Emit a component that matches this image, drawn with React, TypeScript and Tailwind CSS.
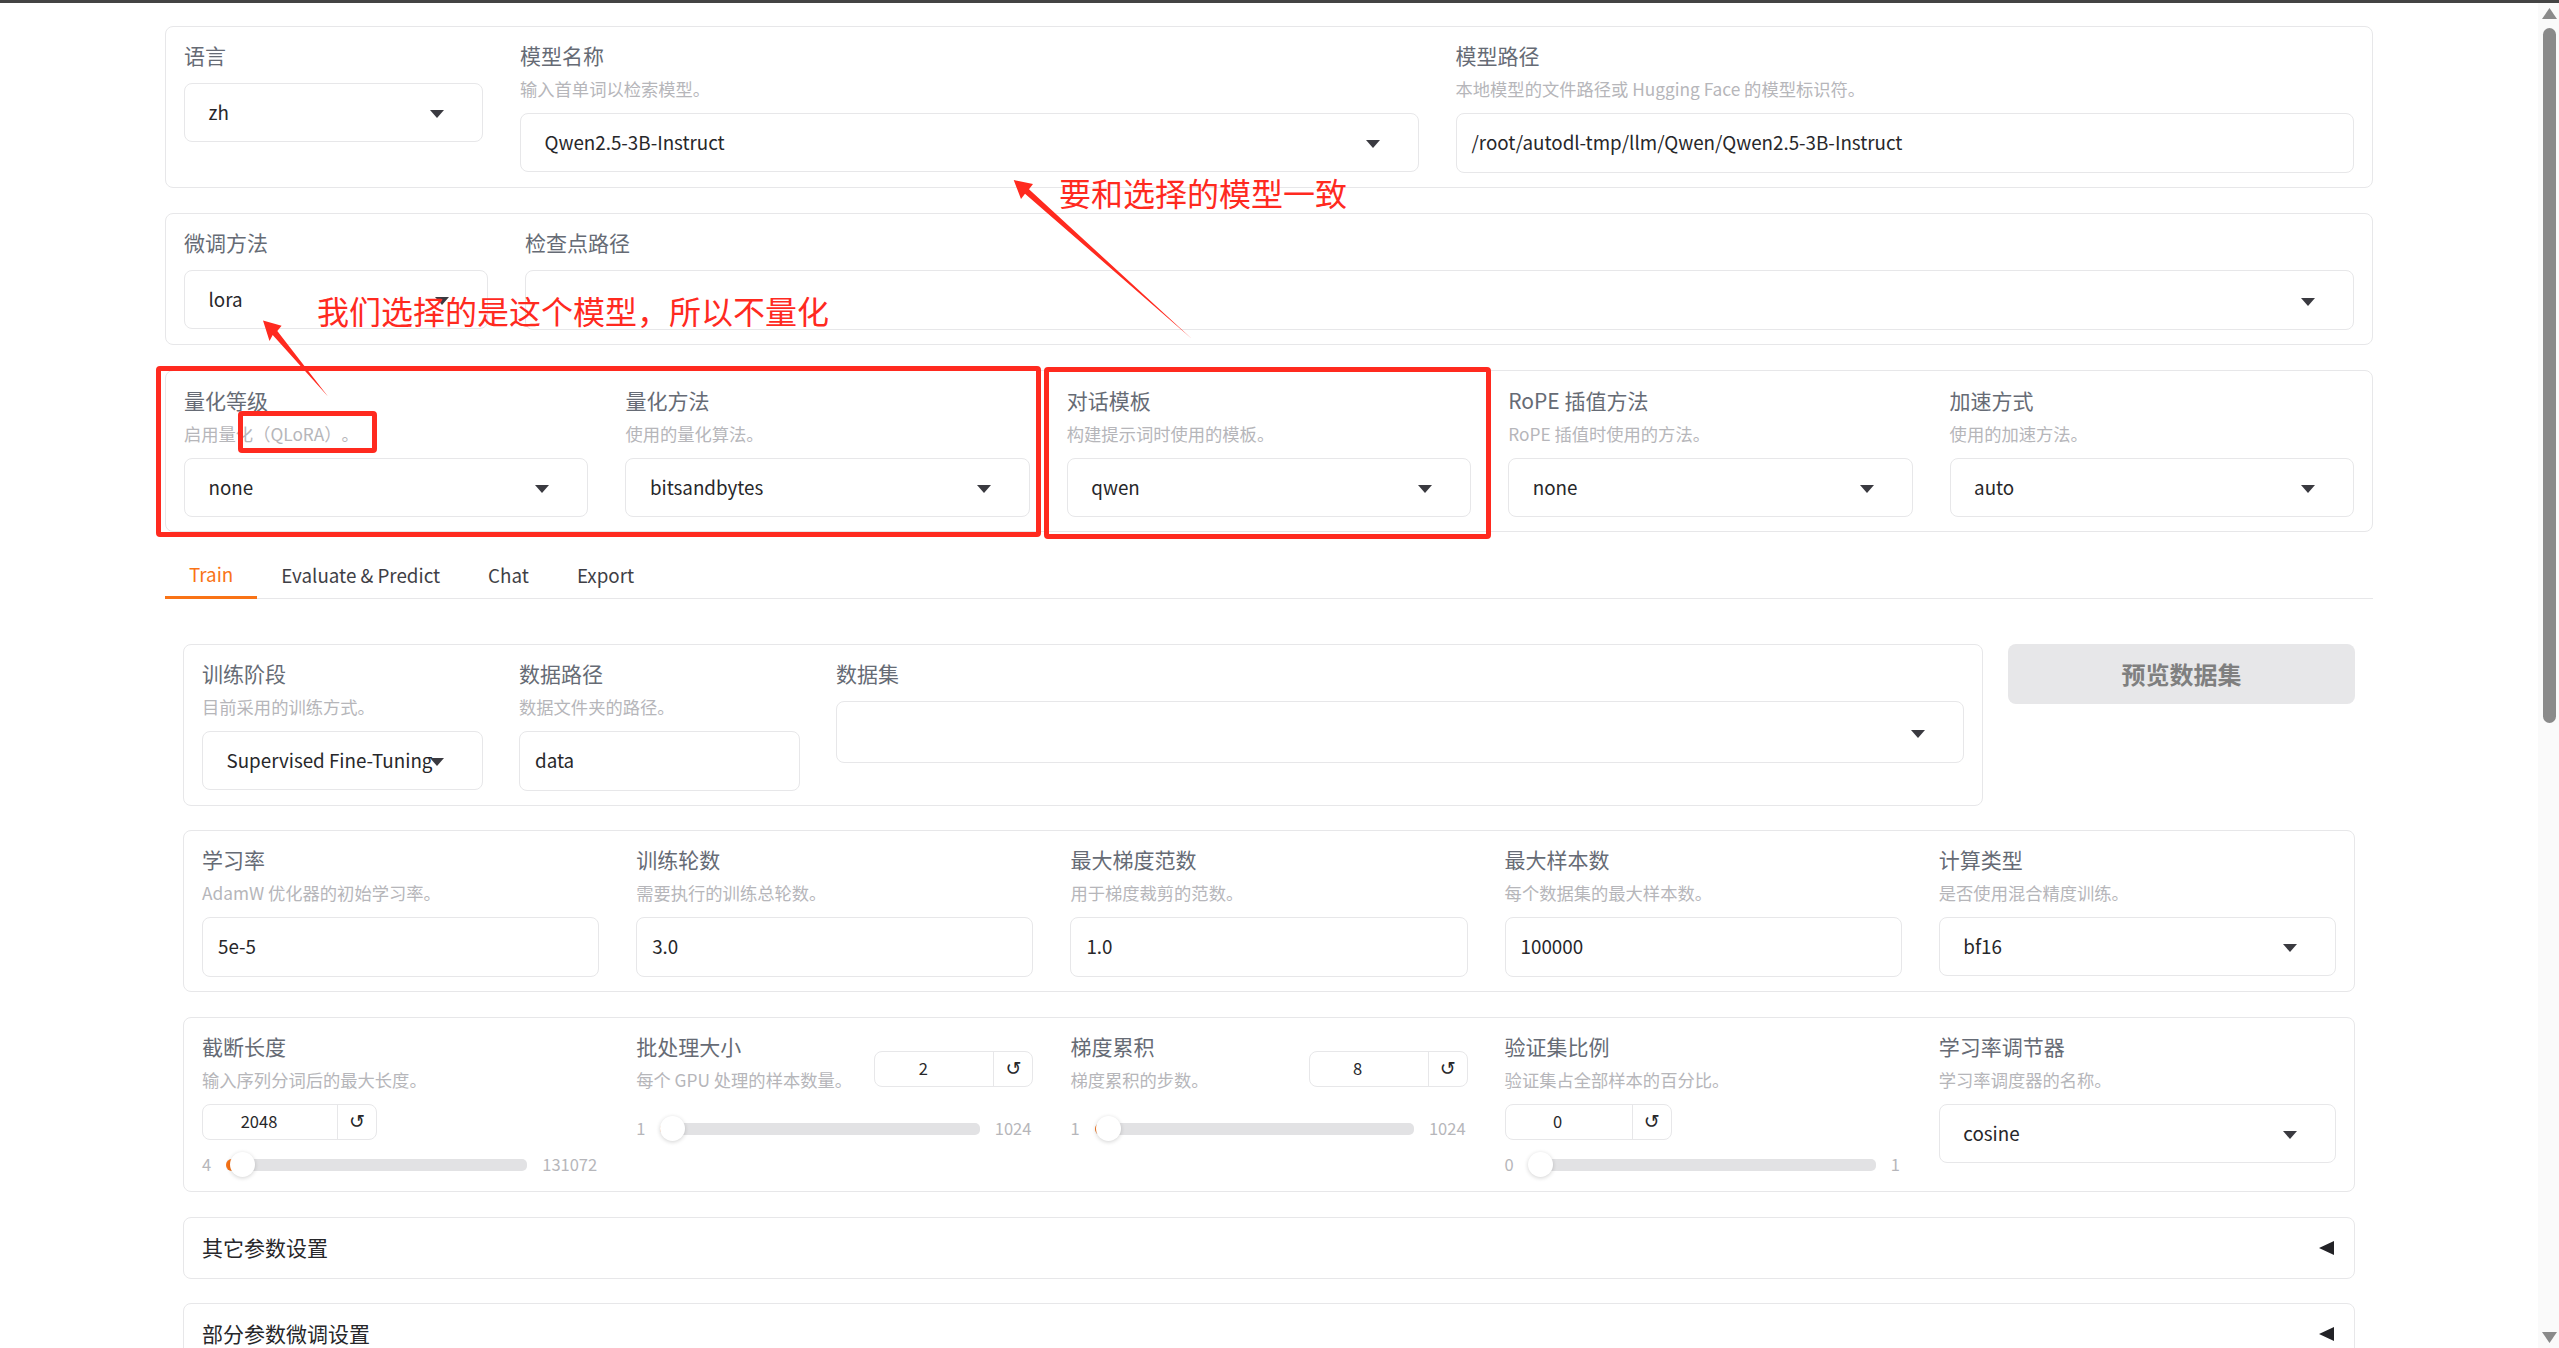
const panel = "rounded-[8px] border-[1.5px] border-[#e7e7e9] bg-white px-[18px] pt-[14.5px] pb-[14.5px]";
const box = "rounded-[8px] border-[1.5px] border-[#e7e7e9] bg-white";

const Caret = () => (
  <svg width="14" height="8" viewBox="0 0 14 8" className="absolute right-[38px] top-1/2 -translate-y-[2px] fill-[#3a3a40]">
    <path d="M0 0h14L7 8z" />
  </svg>
);

const Head = ({ label, info }: { label: string; info?: string }) => (
  <>
    <div className={`h-[30px] text-[21px] leading-[26px] text-[#666b75] ${info ? "mb-[5px]" : "mb-[11px]"}`}>{label}</div>
    {info && (
      <div className="mb-[12px] h-[24px] whitespace-nowrap text-[17.3px] leading-[24px] text-[#b6b6ba] [text-spacing-trim:space-all]">
        {info}
      </div>
    )}
  </>
);

const Select = ({ value, h = "h-[59px]" }: { value?: string; h?: string }) => (
  <div className={`relative flex items-center whitespace-nowrap pl-[23.5px] text-[18.8px] text-[#27272a] ${box} ${h}`}>
    {value}
    <Caret />
  </div>
);

const Input = ({ value }: { value: string }) => (
  <div className={`flex h-[60px] items-center whitespace-nowrap pl-[15px] text-[18.8px] text-[#27272a] ${box}`}>{value}</div>
);

const NumberBox = ({ value, w }: { value: string; w: string }) => (
  <div className={`flex h-[36px] items-center text-[16.5px] text-[#27272a] ${box} ${w}`}>
    <div className="flex-1 pr-[22px] text-center">{value}</div>
    <div className="flex h-full w-[39px] items-center justify-center border-l-[1.5px] border-[#e7e7e9] font-['DejaVu_Sans',sans-serif] text-[19px]">↺</div>
  </div>
);

const Slider = ({ min, max, thumb, fill }: { min: string; max: string; thumb: string; fill: string }) => (
  <div className="mt-[13px] flex h-[24px] items-center gap-[15px] pr-[2px] text-[16.5px] text-[#b6b6ba]">
    <span>{min}</span>
    <div className="relative h-[12px] flex-1 rounded-[5px] bg-[#e2e2e4]">
      <div className={`absolute left-0 top-0 h-full rounded-l-[6px] bg-[#f97316] ${fill}`} />
      <div className={`absolute -top-[6.5px] h-[25px] w-[25px] rounded-full bg-white shadow-[0_1px_4px_rgba(0,0,0,0.18)] ${thumb}`} />
    </div>
    <span>{max}</span>
  </div>
);

const Accordion = ({ title }: { title: string }) => (
  <div className={`flex h-[62px] shrink-0 items-center justify-between pl-[18px] pr-[20px] text-[21px] leading-[26px] text-[#27272a] ${box}`}>
    <span className="-mt-[2px]">{title}</span>
    <svg width="15" height="14" viewBox="0 0 15 14" className="fill-[#222226]">
      <path d="M15 0v14L0 7z" />
    </svg>
  </div>
);

const InlineHead = ({ label, info, value, w }: { label: string; info: string; value: string; w: string }) => (
  <div className="flex justify-between">
    <div>
      <Head label={label} info={info} />
    </div>
    <div className="mt-[18px]">
      <NumberBox value={value} w={w} />
    </div>
  </div>
);

const Annotations = () => (
  <div className="pointer-events-none absolute inset-0">
    <div className="absolute left-[156px] top-[366px] h-[171px] w-[885px] rounded-[4px] border-[5px] border-[#ff2a1f]" />
    <div className="absolute left-[1044px] top-[367px] h-[172px] w-[447px] rounded-[4px] border-[5px] border-[#ff2a1f]" />
    <div className="absolute left-[238px] top-[411px] h-[42px] w-[139px] rounded-[4px] border-[5px] border-[#ff2a1f]" />
    <svg className="absolute inset-0" width="2559" height="1348" viewBox="0 0 2559 1348">
      <path fill="#ff2a1f" d="M1013.7 180L1033 184L1029 189.3L1192 339L1025 193.7L1021 199Z" />
      <path fill="#ff2a1f" d="M263 320.4L281.6 325.7L277.3 331L328 396.4L272.7 335L269.5 341Z" />
    </svg>
    <div className="absolute left-[1059px] top-[171.5px] whitespace-nowrap text-[32px] leading-[40px] text-[#ff2a1f]">要和选择的模型一致</div>
    <div className="absolute left-[317px] top-[290px] whitespace-nowrap text-[32px] leading-[40px] text-[#ff2a1f]">我们选择的是这个模型，所以不量化</div>
  </div>
);

export default function App() {
  return (
    <div className="relative h-[1348px] w-full overflow-hidden bg-white font-['Noto_Sans_CJK_SC','Noto_Sans',sans-serif]">
      <div className="h-[3px] bg-[#444444]" />
      <div className="flex h-[1345px]">
        <main className="ml-[165px] flex w-[2208px] shrink-0 flex-col pt-[23px]">
          <section className={panel}>
            <div className="grid grid-cols-[299px_1fr_1fr] gap-[37px]">
              <div>
                <Head label="语言" />
                <Select value="zh" />
              </div>
              <div>
                <Head label="模型名称" info="输入首单词以检索模型。" />
                <Select value="Qwen2.5-3B-Instruct" />
              </div>
              <div>
                <Head label="模型路径" info="本地模型的文件路径或 Hugging Face 的模型标识符。" />
                <Input value="/root/autodl-tmp/llm/Qwen/Qwen2.5-3B-Instruct" />
              </div>
            </div>
          </section>

          <section className={`mt-[25px] ${panel}`}>
            <div className="grid grid-cols-[304px_1fr] gap-[37px]">
              <div>
                <Head label="微调方法" />
                <Select value="lora" />
              </div>
              <div>
                <Head label="检查点路径" />
                <Select h="h-[60px]" />
              </div>
            </div>
          </section>

          <section className="mt-[25px] rounded-[8px] border-[1.5px] border-[#e7e7e9] bg-white px-[18px] pb-[14.5px] pt-[15.5px]">
            <div className="grid grid-cols-5 gap-[37px]">
              <div>
                <Head label="量化等级" info="启用量化（QLoRA）。" />
                <Select value="none" />
              </div>
              <div>
                <Head label="量化方法" info="使用的量化算法。" />
                <Select value="bitsandbytes" />
              </div>
              <div>
                <Head label="对话模板" info="构建提示词时使用的模板。" />
                <Select value="qwen" />
              </div>
              <div>
                <Head label="RoPE 插值方法" info="RoPE 插值时使用的方法。" />
                <Select value="none" />
              </div>
              <div>
                <Head label="加速方式" info="使用的加速方法。" />
                <Select value="auto" />
              </div>
            </div>
          </section>

          <nav className="mt-[20px] flex h-[47px] shrink-0 border-b-[1.5px] border-[#e7e7e9] text-[18.8px] text-[#3f3f46]">
            <div className="flex h-[47px] items-center border-b-[3px] border-[#f97316] px-[24px] text-[#f97316]">Train</div>
            <div className="flex items-center px-[24px]">Evaluate &amp; Predict</div>
            <div className="flex items-center px-[24px]">Chat</div>
            <div className="flex items-center px-[24px]">Export</div>
          </nav>

          <div className="mt-[45px] flex flex-1 flex-col px-[18px]">
            <div className="flex gap-[25px]">
              <section className={`flex-1 ${panel}`}>
                <div className="grid grid-cols-[281px_281px_1fr] gap-[36px]">
                  <div>
                    <Head label="训练阶段" info="目前采用的训练方式。" />
                    <Select value="Supervised Fine-Tuning" />
                  </div>
                  <div>
                    <Head label="数据路径" info="数据文件夹的路径。" />
                    <Input value="data" />
                  </div>
                  <div>
                    <Head label="数据集" />
                    <Select h="h-[62px]" />
                  </div>
                </div>
              </section>
              <button className="flex h-[60px] w-[347px] shrink-0 items-center justify-center rounded-[8px] bg-[#e7e7e9] text-[24px] font-bold text-[#7f7f7f]">
                预览数据集
              </button>
            </div>

            <section className={`mt-[24px] ${panel}`}>
              <div className="grid grid-cols-5 gap-[37px]">
                <div>
                  <Head label="学习率" info="AdamW 优化器的初始学习率。" />
                  <Input value="5e-5" />
                </div>
                <div>
                  <Head label="训练轮数" info="需要执行的训练总轮数。" />
                  <Input value="3.0" />
                </div>
                <div>
                  <Head label="最大梯度范数" info="用于梯度裁剪的范数。" />
                  <Input value="1.0" />
                </div>
                <div>
                  <Head label="最大样本数" info="每个数据集的最大样本数。" />
                  <Input value="100000" />
                </div>
                <div>
                  <Head label="计算类型" info="是否使用混合精度训练。" />
                  <Select value="bf16" />
                </div>
              </div>
            </section>

            <section className={`mt-[25px] ${panel}`}>
              <div className="grid grid-cols-5 gap-[37px]">
                <div>
                  <Head label="截断长度" info="输入序列分词后的最大长度。" />
                  <NumberBox value="2048" w="w-[175px]" />
                  <Slider min="4" max="131072" thumb="left-[3.5px]" fill="w-[16px]" />
                </div>
                <div>
                  <InlineHead label="批处理大小" info="每个 GPU 处理的样本数量。" value="2" w="w-[159px]" />
                  <Slider min="1" max="1024" thumb="-left-[0.5px]" fill="w-[6px]" />
                </div>
                <div>
                  <InlineHead label="梯度累积" info="梯度累积的步数。" value="8" w="w-[159px]" />
                  <Slider min="1" max="1024" thumb="left-[1.5px]" fill="w-[14px]" />
                </div>
                <div>
                  <Head label="验证集比例" info="验证集占全部样本的百分比。" />
                  <NumberBox value="0" w="w-[167px]" />
                  <Slider min="0" max="1" thumb="-left-[0.5px]" fill="w-[6px]" />
                </div>
                <div>
                  <Head label="学习率调节器" info="学习率调度器的名称。" />
                  <Select value="cosine" />
                </div>
              </div>
            </section>

            <div className="mt-[25px]">
              <Accordion title="其它参数设置" />
            </div>
            <div className="mt-[24px]">
              <Accordion title="部分参数微调设置" />
            </div>
          </div>
        </main>

        <aside className="ml-auto flex w-[21px] flex-col items-start bg-[#fafafa] pb-[5px] pl-[4px] pt-[5px]">
          <svg width="15" height="11" viewBox="0 0 15 11" className="fill-[#8a8a8a]">
            <path d="M7.5 0L15 11H0z" />
          </svg>
          <div className="ml-[1px] mt-[9px] h-[695px] w-[13px] rounded-[7px] bg-[#8a8a8a]" />
          <svg width="15" height="11" viewBox="0 0 15 11" className="mt-auto fill-[#8a8a8a]">
            <path d="M0 0h15L7.5 11z" />
          </svg>
        </aside>
      </div>
      <Annotations />
    </div>
  );
}
